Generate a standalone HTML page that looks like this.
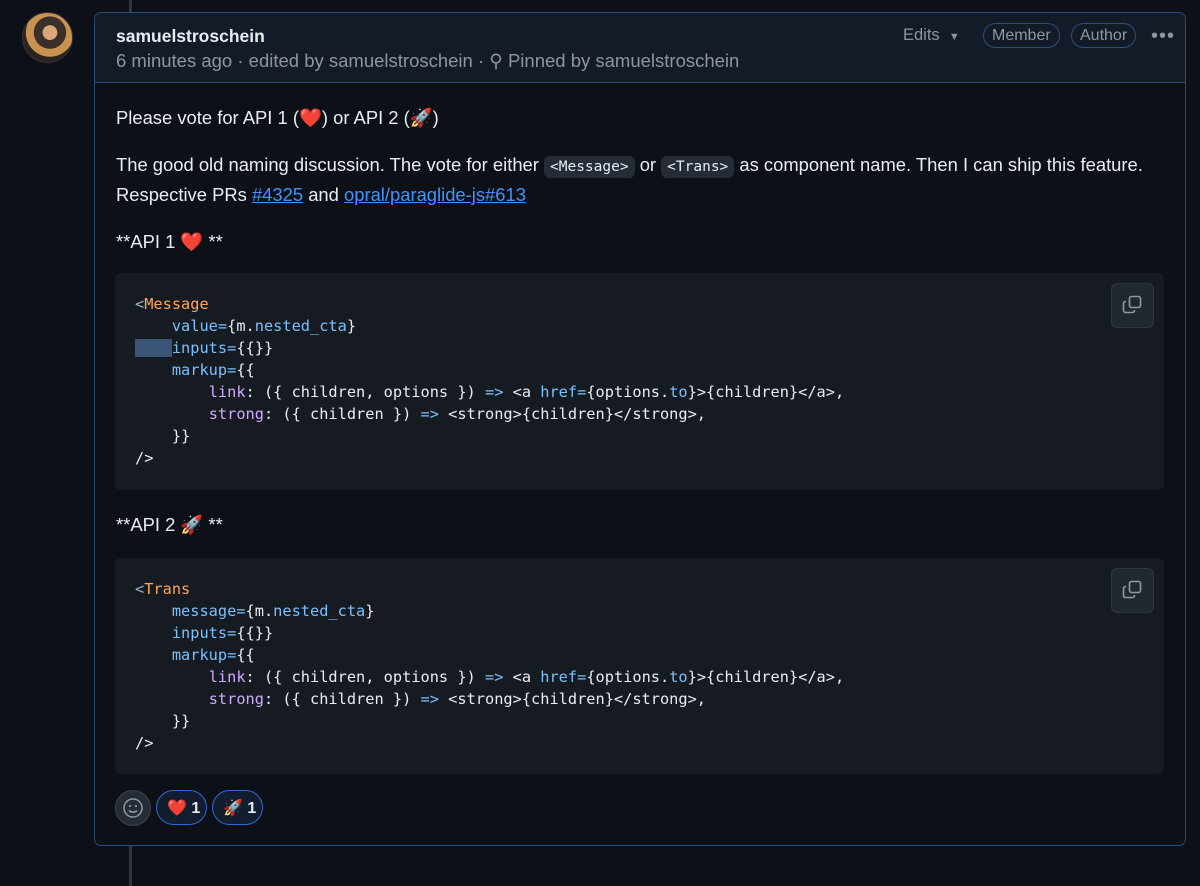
<!DOCTYPE html>
<html><head><meta charset="utf-8"><style>
*{margin:0;padding:0;box-sizing:border-box}
body{width:1200px;height:885px;background:#0d1117;font-family:"Liberation Sans",sans-serif;color:#e6edf3;position:relative;overflow:hidden}
.line{position:absolute;left:129px;width:3px;background:#30363d}
.av{position:absolute;left:22px;top:12px;width:51px;height:51px;border-radius:50%;background:radial-gradient(circle at 55% 40%,#d9a77a 0 18%,#3a2f2a 19% 40%,#c9924f 41% 60%,#2a2320 61%);border:1px solid #30363d}
.card{position:absolute;left:94px;top:12px;width:1092px;height:834px;border:1px solid #2b4a77;border-radius:7px;overflow:hidden}
.hd{height:70px;background:#141b28;border-bottom:1px solid #2b4a77;position:relative}
.name{position:absolute;left:21px;top:13px;font-size:17.5px;font-weight:bold;color:#e6edf3}
.meta{position:absolute;left:21px;top:37px;font-size:18.5px;color:#8d96a0}
.edits{position:absolute;left:808px;top:13px;font-size:16.5px;color:#8d96a0}
.pill{position:absolute;top:10px;height:25px;border:1px solid #2f4d77;border-radius:13px;font-size:16px;line-height:23px;color:#8d96a0;padding:0 8px}
.dots{position:absolute;left:1056px;top:12px;font-size:20px;color:#8d96a0;letter-spacing:1px}
p{position:absolute;left:21px;font-size:18.4px;line-height:28px}
code.i{font-family:"DejaVu Sans Mono",monospace;font-size:14.5px;background:#262c36;border-radius:6px;padding:3px 6px}
a{color:#4493f8;text-decoration:underline}
.cb{position:absolute;left:20px;width:1049px;background:#161b22;border-radius:6px}
pre{position:absolute;left:20px;top:20px;font-family:"DejaVu Sans Mono",monospace;font-size:15.3px;line-height:22px;color:#e6edf3}
.o{color:#ffa657}.b{color:#79c0ff}.p{color:#d2a8ff}.g{color:#9fb3c8}
.copy{position:absolute;right:10px;top:10px;width:43px;height:45px;border:1px solid #30363d;border-radius:6px;background:#212830}
.r{position:absolute;top:777px;height:35px;border-radius:18px;font-size:16px;font-weight:bold}
</style></head><body>
<div class="line" style="top:0;height:12px"></div>
<div class="line" style="top:846px;height:40px"></div>
<div class="av"></div>
<div class="card">
 <div class="hd">
  <div class="name">samuelstroschein</div>
  <div class="meta">6 minutes ago · edited by samuelstroschein · ⚲ Pinned by samuelstroschein</div>
  <div class="edits">Edits &nbsp;<span style="font-size:11px">▼</span></div>
  <div class="pill" style="left:888px">Member</div>
  <div class="pill" style="left:976px">Author</div>
  <div class="dots">•••</div>
 </div>
 <p style="top:91px">Please vote for API 1 (❤️) or API 2 (🚀)</p>
 <p style="top:138px">The good old naming discussion. The vote for either <code class="i">&lt;Message&gt;</code> or <code class="i">&lt;Trans&gt;</code> as component name. Then I can ship this feature.<br>Respective PRs <a>#4325</a> and <a>opral/paraglide-js#613</a></p>
 <p style="top:215px">**API 1 ❤️ **</p>
 <div class="cb" style="top:260px;height:217px">
  <pre><span class="g">&lt;</span><span class="o">Message</span>
    <span class="b">value=</span>{m.<span class="b">nested_cta</span>}
<span style="background:#3a5478">    </span><span class="b">inputs=</span>{{}}
    <span class="b">markup=</span>{{
        <span class="p">link</span>: ({ children, options }) <span class="b">=&gt;</span> &lt;a <span class="b">href=</span>{options.<span class="b">to</span>}&gt;{children}&lt;/a&gt;,
        <span class="p">strong</span>: ({ children }) <span class="b">=&gt;</span> &lt;strong&gt;{children}&lt;/strong&gt;,
    }}
/&gt;</pre>
  <div class="copy"><svg width="43" height="45" viewBox="0 0 43 45"><rect x="17.5" y="12.5" width="11" height="11" rx="2" fill="none" stroke="#9198a1" stroke-width="1.6"/><path d="M14 17.5h-0.5a2 2 0 0 0-2 2v7a2 2 0 0 0 2 2h7a2 2 0 0 0 2-2v-0.5" fill="none" stroke="#9198a1" stroke-width="1.6"/></svg></div>
 </div>
 <p style="top:498px">**API 2 🚀 **</p>
 <div class="cb" style="top:545px;height:216px">
  <pre><span class="g">&lt;</span><span class="o">Trans</span>
    <span class="b">message=</span>{m.<span class="b">nested_cta</span>}
    <span class="b">inputs=</span>{{}}
    <span class="b">markup=</span>{{
        <span class="p">link</span>: ({ children, options }) <span class="b">=&gt;</span> &lt;a <span class="b">href=</span>{options.<span class="b">to</span>}&gt;{children}&lt;/a&gt;,
        <span class="p">strong</span>: ({ children }) <span class="b">=&gt;</span> &lt;strong&gt;{children}&lt;/strong&gt;,
    }}
/&gt;</pre>
  <div class="copy"><svg width="43" height="45" viewBox="0 0 43 45"><rect x="17.5" y="12.5" width="11" height="11" rx="2" fill="none" stroke="#9198a1" stroke-width="1.6"/><path d="M14 17.5h-0.5a2 2 0 0 0-2 2v7a2 2 0 0 0 2 2h7a2 2 0 0 0 2-2v-0.5" fill="none" stroke="#9198a1" stroke-width="1.6"/></svg></div>
 </div>
 <div class="r" style="left:20px;width:36px;height:36px;background:#262c36;border:1px solid #3d444d"><svg width="34" height="34" viewBox="0 0 34 34"><circle cx="17" cy="17" r="9" fill="none" stroke="#9198a1" stroke-width="1.5"/><circle cx="14" cy="15" r="1.1" fill="#9198a1"/><circle cx="20" cy="15" r="1.1" fill="#9198a1"/><path d="M13 19.5q4 3.5 8 0" fill="none" stroke="#9198a1" stroke-width="1.5"/></svg></div>
 <div class="r" style="left:61px;width:51px;border:1.5px solid #2f6ad0;background:#121d2f;padding:7px 0 0 10px">❤️ 1</div>
 <div class="r" style="left:117px;width:51px;border:1.5px solid #2f6ad0;background:#121d2f;padding:7px 0 0 10px">🚀 1</div>
</div>
</body></html>
